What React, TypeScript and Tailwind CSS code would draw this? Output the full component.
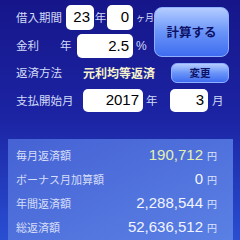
import React from "react";

const jp = { fontFamily: '"Noto Sans CJK JP", "Noto Sans", sans-serif' };
const num = { fontFamily: '"Liberation Sans", Arial, sans-serif' };

function Box({ w, value }: { w: string; value: string }) {
  return (
    <div
      className={`${w} h-full bg-white rounded-[5px] flex items-center justify-end pr-[4px] text-[15px] text-black`}
      style={num}
    >
      {value}
    </div>
  );
}

function Row({ label, value, yellow }: { label: string; value: string; yellow?: boolean }) {
  return (
    <div className="flex items-center h-[24px] pl-[8px] pr-[15px]">
      <span className="text-[11px] text-[#d6def8]" style={jp}>
        {label}
      </span>
      <span
        className={`flex-1 text-right text-[15px] ${yellow ? "text-[#e4f0b0]" : "text-[#f2f4ff]"}`}
        style={num}
      >
        {value}
      </span>
      <span className="w-[11px] ml-[4px] text-[10px] text-[#dde4fa]" style={jp}>
        円
      </span>
    </div>
  );
}

export default function App() {
  return (
    <div
      className="w-[240px] h-[240px] overflow-hidden flex flex-col bg-gradient-to-b from-[#16168a] via-[#1c24a4] to-[#2a4ed2] text-[#d2daf6]"
      style={jp}
    >
      <div className="flex pl-[16px] pt-[5px]">
        <div className="flex flex-col gap-[4px] w-[138px]">
          <div className="flex items-center h-[25px]">
            <span className="w-[50px] text-[11.5px]">借入期間</span>
            <Box w="w-[28px]" value="23" />
            <span className="w-[13px] text-center text-[11.5px]">年</span>
            <Box w="w-[26px]" value="0" />
            <span className="ml-[3px] text-[9px] whitespace-nowrap">ヶ月</span>
          </div>
          <div className="flex items-center h-[24px]">
            <span className="w-[44px] text-[11.5px]">金利</span>
            <span className="w-[17px] text-[11.5px]">年</span>
            <Box w="w-[56px]" value="2.5" />
            <span className="ml-[3px] text-[12px]" style={num}>%</span>
          </div>
        </div>
        <div className="mt-[2px] w-[75px] h-[50px] rounded-[8px] border border-[#8fb0ff] bg-gradient-to-b from-[#b4ccff] via-[#6a94f8] to-[#3f6cf0] flex items-center justify-center text-[12.5px] font-bold text-[#0e1266]">
          計算する
        </div>
      </div>

      <div className="flex items-center pl-[16px] pr-[11px] mt-[5px] h-[20px]">
        <span className="w-[67px] text-[11.5px]">返済方法</span>
        <span className="text-[12px] font-bold text-[#f4f2cc]">元利均等返済</span>
        <div className="ml-auto w-[58px] h-[20px] rounded-[6px] border border-[#8fb0ff] bg-gradient-to-b from-[#b4ccff] via-[#6a94f8] to-[#3f6cf0] flex items-center justify-center text-[10.5px] font-bold text-[#0e1266]">
          変更
        </div>
      </div>

      <div className="flex items-center pl-[16px] mt-[6px] h-[23px]">
        <span className="w-[67px] text-[11.5px]">支払開始月</span>
        <Box w="w-[60px]" value="2017" />
        <span className="w-[27px] pl-[3px] text-[11.5px]">年</span>
        <Box w="w-[38px]" value="3" />
        <span className="ml-[4px] text-[11.5px]">月</span>
      </div>

      <div className="mt-[27px] ml-[8px] w-[225px] flex-1 pt-[4px] bg-gradient-to-br from-[#4662d4] to-[#5a80e4]">
        <Row label="毎月返済額" value="190,712" yellow />
        <Row label="ボーナス月加算額" value="0" />
        <Row label="年間返済額" value="2,288,544" />
        <Row label="総返済額" value="52,636,512" />
      </div>
    </div>
  );
}
